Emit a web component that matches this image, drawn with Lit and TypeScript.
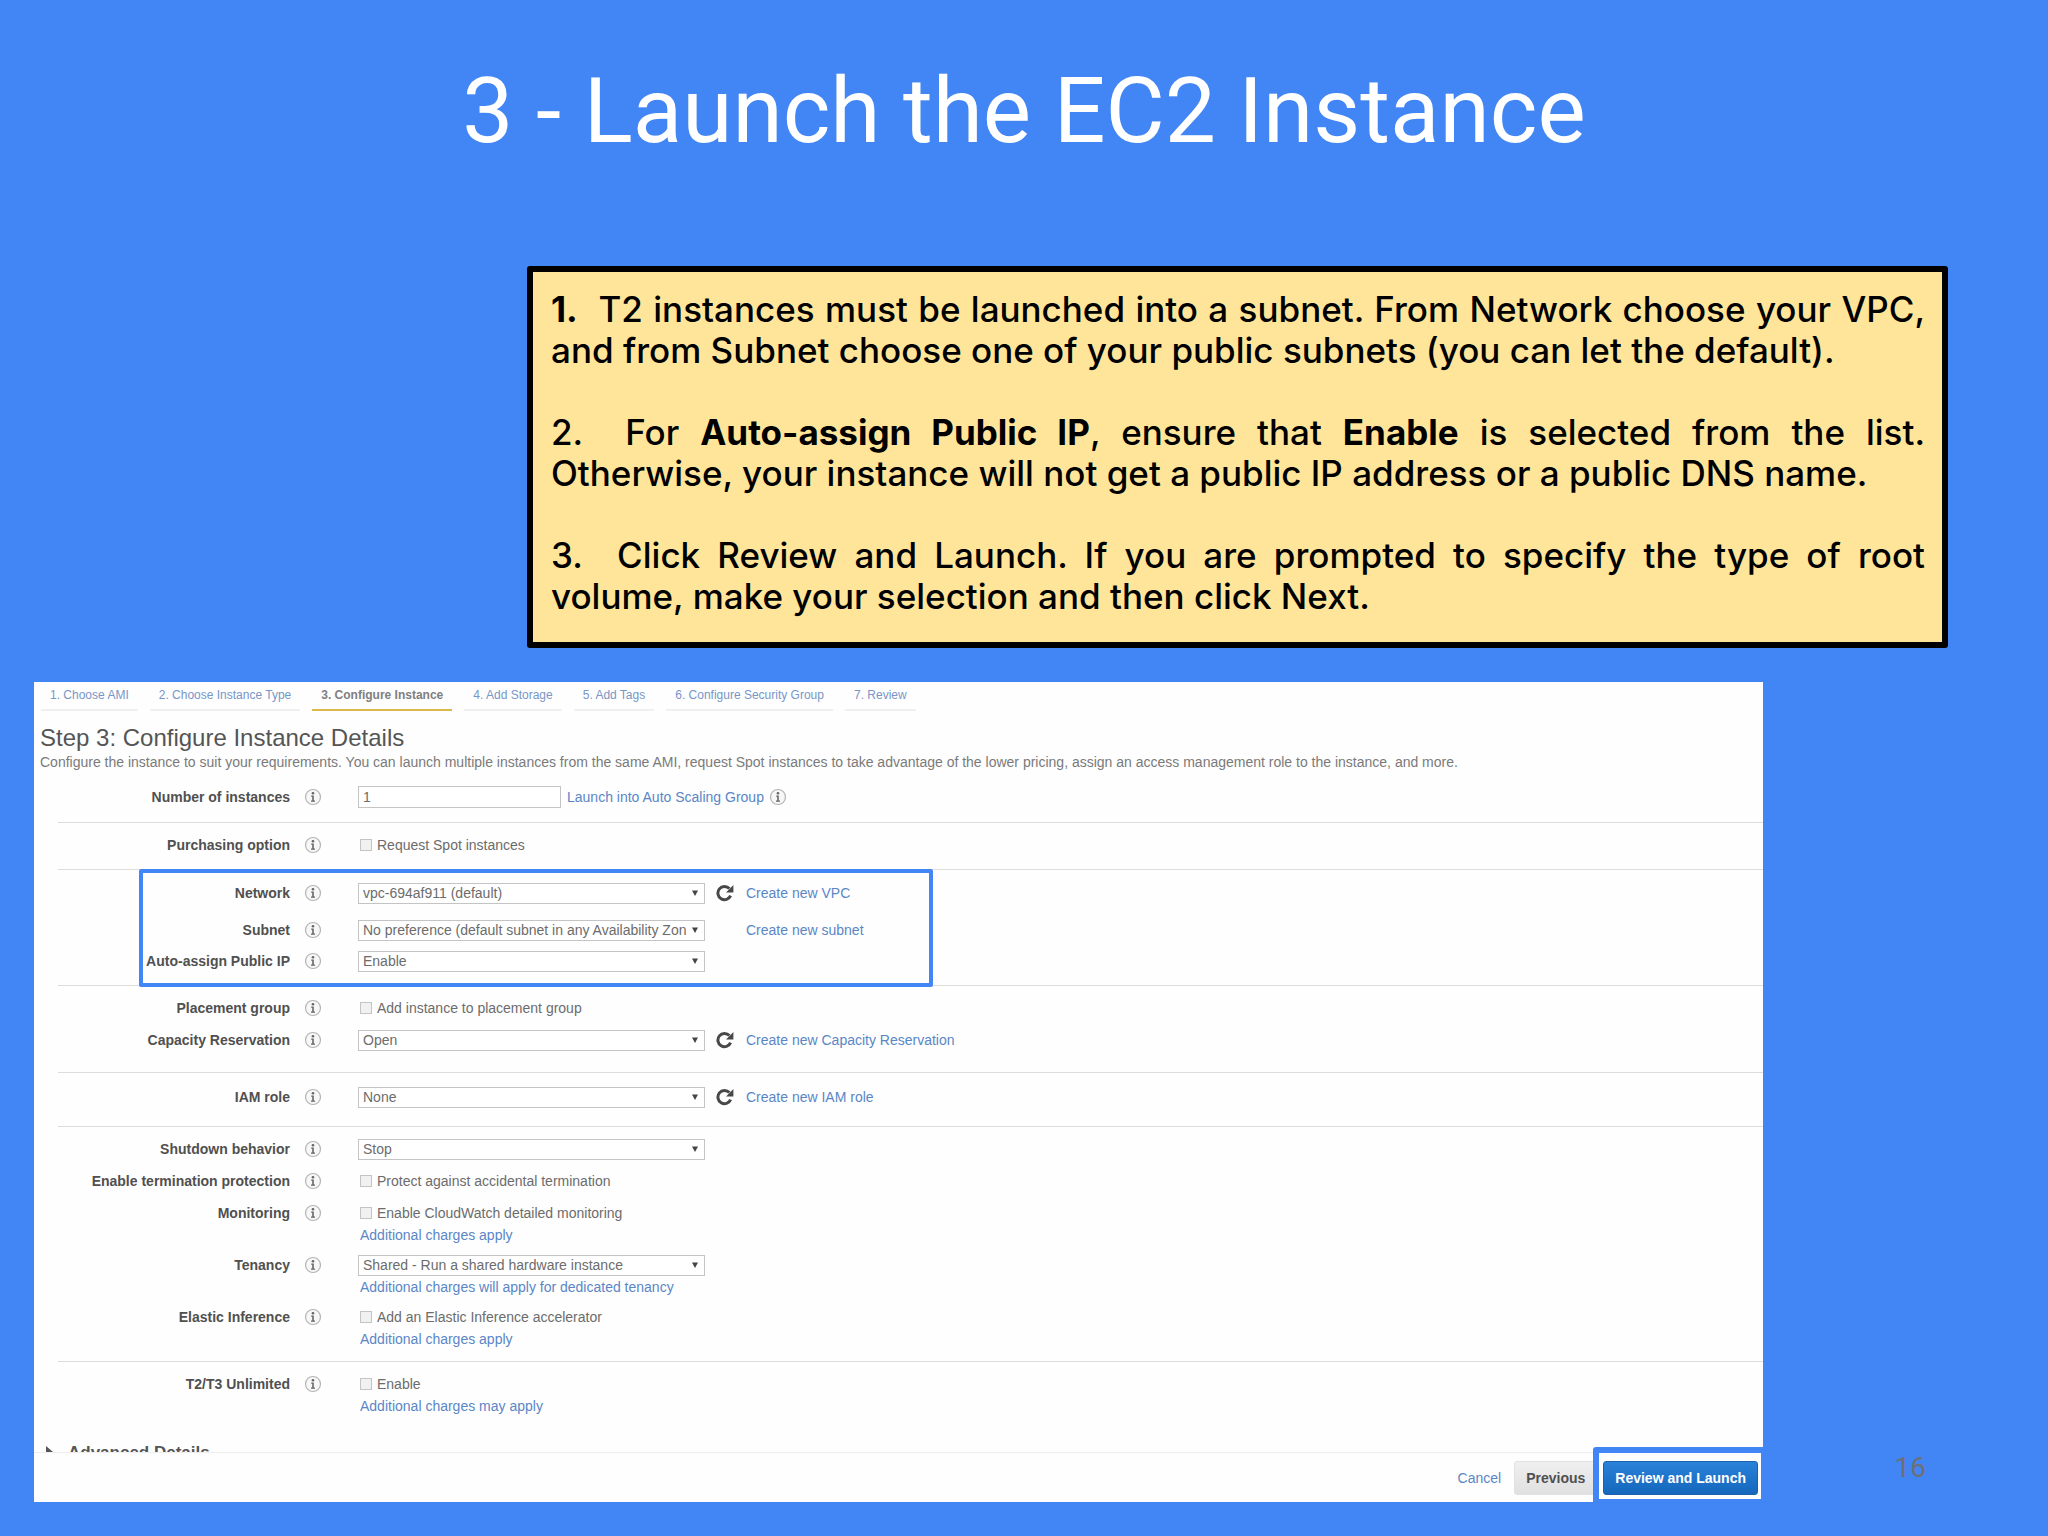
import { LitElement, html, css, svg, nothing, TemplateResult } from "lit";
import { customElement, property } from "lit/decorators.js";

type Control =
  | { kind: "number"; value: string; link: string }
  | { kind: "select"; value: string; link?: string; refresh?: boolean }
  | { kind: "check"; text: string };

interface Field {
  id: string;
  label: string;
  control: Control;
  note?: string;
  roomy?: boolean;
}

interface Group {
  name: string;
  fields: Field[];
  marked?: boolean;
}

const TABS = [
  "1. Choose AMI",
  "2. Choose Instance Type",
  "3. Configure Instance",
  "4. Add Storage",
  "5. Add Tags",
  "6. Configure Security Group",
  "7. Review",
];

const GROUPS: Group[] = [
  {
    name: "count",
    fields: [
      { id: "count", label: "Number of instances", control: { kind: "number", value: "1", link: "Launch into Auto Scaling Group" } },
    ],
  },
  {
    name: "purchase",
    fields: [{ id: "spot", label: "Purchasing option", control: { kind: "check", text: "Request Spot instances" } }],
  },
  {
    name: "network",
    marked: true,
    fields: [
      { id: "vpc", label: "Network", roomy: true, control: { kind: "select", value: "vpc-694af911 (default)", refresh: true, link: "Create new VPC" } },
      { id: "subnet", label: "Subnet", control: { kind: "select", value: "No preference (default subnet in any Availability Zone)", link: "Create new subnet" } },
      { id: "public-ip", label: "Auto-assign Public IP", control: { kind: "select", value: "Enable" } },
    ],
  },
  {
    name: "placement",
    fields: [
      { id: "placement", label: "Placement group", control: { kind: "check", text: "Add instance to placement group" } },
      { id: "capacity", label: "Capacity Reservation", control: { kind: "select", value: "Open", refresh: true, link: "Create new Capacity Reservation" } },
    ],
  },
  {
    name: "iam",
    fields: [{ id: "iam", label: "IAM role", control: { kind: "select", value: "None", refresh: true, link: "Create new IAM role" } }],
  },
  {
    name: "behavior",
    fields: [
      { id: "shutdown", label: "Shutdown behavior", control: { kind: "select", value: "Stop" } },
      { id: "protect", label: "Enable termination protection", control: { kind: "check", text: "Protect against accidental termination" } },
      { id: "monitoring", label: "Monitoring", control: { kind: "check", text: "Enable CloudWatch detailed monitoring" }, note: "Additional charges apply" },
      { id: "tenancy", label: "Tenancy", control: { kind: "select", value: "Shared - Run a shared hardware instance" }, note: "Additional charges will apply for dedicated tenancy" },
      { id: "elastic", label: "Elastic Inference", control: { kind: "check", text: "Add an Elastic Inference accelerator" }, note: "Additional charges apply" },
    ],
  },
  {
    name: "unlimited",
    fields: [{ id: "unlimited", label: "T2/T3 Unlimited", control: { kind: "check", text: "Enable" }, note: "Additional charges may apply" }],
  },
];

const infoIcon = html`<svg class="info" viewBox="0 0 18 18" aria-hidden="true">
  ${svg`<circle cx="9" cy="9" r="7.5" fill="#f7f7f7" stroke="#b4b4b4" stroke-width="1.2"/>
  <circle cx="9" cy="5.2" r="1.3" fill="#666"/>
  <path d="M7.2 7.6h2.6v5h1.2v1.2H7v-1.2h1.2V8.8h-1z" fill="#666"/>`}
</svg>`;

const refreshIcon = html`<svg class="refresh" viewBox="0 0 18 18" aria-hidden="true">
  ${svg`<path d="M14.6 11.6A6.6 6.6 0 1 1 13.4 4.6" fill="none" stroke="#484848" stroke-width="3"/>
  <path d="M17.4 1v7.4H10z" fill="#484848"/>`}
</svg>`;

const arrowIcon = html`<svg class="arrow" viewBox="0 0 6 6" aria-hidden="true">${svg`<path d="M0 0.5h6L3 6z" fill="#444"/>`}</svg>`;

@customElement("instance-form")
export class InstanceForm extends LitElement {
  @property({ attribute: false }) groups: Group[] = [];

  static styles = css`
    :host {
      display: block;
      padding-left: 24px;
      font-size: 14px;
      color: #6c6c6c;
    }
    .group {
      position: relative;
      display: flex;
      flex-direction: column;
      gap: 8px;
      padding: 12px 0;
      border-bottom: 1px solid #ddd;
    }
    .purchase { padding: 10px 0 12px; }
    .network { padding: 11px 0 12px; gap: 7px; }
    .placement { padding: 10px 0 20px; }
    .iam { padding-bottom: 17px; }
    .behavior { padding-top: 10px; }
    .unlimited { padding: 10px 0 0; border-bottom: 0; }
    .count .row { min-height: 26px; }
    .row {
      display: grid;
      grid-template-columns: 232px 68px 1fr;
      grid-auto-rows: minmax(20px, auto);
      min-height: 24px;
      align-items: center;
    }
    .roomy { margin-bottom: 6px; }
    .name {
      text-align: right;
      font-weight: bold;
      color: #505050;
      white-space: nowrap;
    }
    .tip {
      padding: 0 0 0 14px;
      margin: 0;
      border: 0;
      background: none;
      display: flex;
    }
    .info { width: 18px; height: 18px; display: block; }
    .control { display: flex; align-items: center; min-height: 24px; }
    .text {
      box-sizing: border-box;
      width: 203px;
      height: 22px;
      margin: 0 6px 0 0;
      padding: 0 4px;
      border: 1px solid #c4c4c4;
      font: inherit;
      color: inherit;
      background: #fff;
    }
    .pick { display: grid; width: 347px; align-items: center; }
    .select {
      grid-area: 1 / 1;
      appearance: none;
      box-sizing: border-box;
      width: 100%;
      height: 21px;
      margin: 0;
      padding: 0 18px 0 4px;
      border: 1px solid #c4c4c4;
      border-radius: 0;
      font: inherit;
      color: inherit;
      background: #fff;
    }
    .arrow {
      grid-area: 1 / 1;
      justify-self: end;
      width: 6px;
      height: 6px;
      margin-right: 7px;
      pointer-events: none;
    }
    .reload {
      display: flex;
      padding: 0;
      border: 0;
      background: none;
      margin-left: 11px;
    }
    .blank { width: 18px; margin-left: 11px; }
    .refresh { width: 18px; height: 18px; display: block; }
    .side { margin-left: 12px; }
    .link { color: #5a86c6; text-decoration: none; }
    .count .tip { padding-left: 5px; }
    .count .name + .tip { padding-left: 14px; }
    .check { display: flex; align-items: center; gap: 5px; padding-left: 2px; }
    .box {
      appearance: none;
      width: 12px;
      height: 12px;
      margin: 0;
      border: 1px solid #c4c4c4;
      background: #f1f1f1;
    }
    .note { grid-column: 3; padding-left: 2px; line-height: 20px; }
    .mark {
      position: absolute;
      left: 81px;
      top: -1px;
      bottom: -2px;
      width: 786px;
      border: 4px solid #4285f4;
      border-radius: 2px;
      pointer-events: none;
    }
  `;

  private control(f: Field): TemplateResult {
    const c = f.control;
    if (c.kind === "number") {
      return html`<input class="text" id=${f.id} type="text" .value=${c.value} />
        <a class="link" href="#">${c.link}</a>
        <button class="tip" type="button" aria-label="About Auto Scaling">${infoIcon}</button>`;
    }
    if (c.kind === "check") {
      return html`<label class="check"><input class="box" id=${f.id} type="checkbox" />${c.text}</label>`;
    }
    return html`<div class="pick">
        <select class="select" id=${f.id}><option>${c.value}</option></select>${arrowIcon}
      </div>
      ${c.refresh
        ? html`<button class="reload" type="button" aria-label="Refresh">${refreshIcon}</button>`
        : html`<span class="blank"></span>`}
      ${c.link ? html`<a class="link side" href="#">${c.link}</a>` : nothing}`;
  }

  render() {
    return this.groups.map(
      (g) => html`<section class="group ${g.name}">
        ${g.fields.map(
          (f) => html`<div class="row ${f.roomy ? "roomy" : ""}">
            <label class="name" for=${f.id}>${f.label}</label>
            <button class="tip" type="button" aria-label="About ${f.label}">${infoIcon}</button>
            <div class="control">${this.control(f)}</div>
            ${f.note ? html`<a class="link note" href="#">${f.note}</a>` : nothing}
          </div>`
        )}
        ${g.marked ? html`<div class="mark"></div>` : nothing}
      </section>`
    );
  }
}

@customElement("app-root")
export class AppRoot extends LitElement {
  static styles = css`
    :host {
      display: block;
      box-sizing: border-box;
      min-height: 100vh;
      padding: 56px 0 34px;
      background: #4285f4;
      font-family: "Liberation Sans", Arial, sans-serif;
    }
    .title {
      margin: 0 0 100px;
      text-align: center;
      font: 400 91px/110px Roboto, sans-serif;
      color: #fff;
    }
    .callout {
      margin: 0 100px 34px 527px;
      padding: 17px 17px 25px 18px;
      border: 6px solid #000;
      border-radius: 3px;
      background: #ffe599;
      color: #000;
      font: 500 35px/41px Inter, "Open Sans", sans-serif;
      text-align: justify;
    }
    .step { margin: 0 0 41px; }
    .step:last-child { margin-bottom: 0; }
    .stage { display: flex; padding-left: 34px; }
    .panel { flex: 1; min-width: 0; background: #fefefe; }
    .page {
      width: 285px;
      box-sizing: border-box;
      padding: 0 122px 18px 0;
      align-self: flex-end;
      text-align: right;
      font: 28px/32px Roboto, sans-serif;
      color: #6e7077;
    }
    .tabs {
      display: flex;
      gap: 12px;
      padding-left: 7px;
      font-size: 12px;
    }
    .tab {
      padding: 0 9px;
      line-height: 27px;
      border-bottom: 2px solid #f0f0f0;
      color: #7896c6;
      text-decoration: none;
      white-space: nowrap;
    }
    .current { color: #808080; border-color: #dcb94a; font-weight: bold; }
    .heading {
      margin: 0;
      padding: 13px 6px 0;
      font-size: 24px;
      font-weight: 400;
      line-height: 28px;
      color: #555;
    }
    .lead {
      margin: 0;
      padding-left: 6px;
      font-size: 14px;
      line-height: 20px;
      color: #7a7a7a;
    }
    .advanced {
      display: flex;
      align-items: flex-start;
      gap: 14px;
      box-sizing: border-box;
      height: 37px;
      padding: 27px 0 0 11px;
      overflow: hidden;
      border-bottom: 1px solid #eee;
      font-size: 17px;
      font-weight: bold;
      line-height: 20px;
      color: #555;
    }
    .caret { width: 9px; height: 12px; margin-top: 3px; }
    .actions {
      display: flex;
      justify-content: flex-end;
      align-items: center;
      height: 49px;
      padding-right: 5px;
      font-size: 14px;
    }
    .cancel { margin-right: 13px; color: #5a86c6; text-decoration: none; }
    .button {
      height: 34px;
      padding: 0 11px;
      border: 1px solid #e2e2e2;
      border-radius: 3px;
      font: bold 14px "Liberation Sans", Arial, sans-serif;
      background: linear-gradient(#f0f0f0, #e0e0e0);
      color: #505050;
    }
    .focus { position: relative; margin-left: 6px; }
    .primary {
      border-color: #1b62ae;
      background: linear-gradient(#2a82d8, #1467bd);
      color: #fff;
      display: block;
    }
    .mark {
      position: absolute;
      inset: -14px -9px -10px -10px;
      border: 6px solid #4285f4;
      border-radius: 3px;
      pointer-events: none;
    }
  `;

  render() {
    return html`
      <h1 class="title">3 - Launch the EC2 Instance</h1>
      <div class="callout">
        <p class="step"><b>1.</b>&nbsp; T2 instances must be launched into a subnet. From Network choose your VPC, and from Subnet choose one of your public subnets (you can let the default).</p>
        <p class="step">2.&nbsp; For <b>Auto-assign Public IP</b>, ensure that <b>Enable</b> is selected from the list. Otherwise, your instance will not get a public IP address or a public DNS name.</p>
        <p class="step">3.&nbsp; Click Review and Launch. If you are prompted to specify the type of root volume, make your selection and then click Next.</p>
      </div>
      <div class="stage">
        <main class="panel">
          <nav class="tabs">
            ${TABS.map((t, i) => html`<a class="tab ${i === 2 ? "current" : ""}" href="#">${t}</a>`)}
          </nav>
          <h2 class="heading">Step 3: Configure Instance Details</h2>
          <p class="lead">Configure the instance to suit your requirements. You can launch multiple instances from the same AMI, request Spot instances to take advantage of the lower pricing, assign an access management role to the instance, and more.</p>
          <instance-form .groups=${GROUPS}></instance-form>
          <div class="advanced">
            <svg class="caret" viewBox="0 0 9 12" aria-hidden="true"><path d="M1 0l7 6-7 6z" fill="#555" /></svg>
            <span>Advanced Details</span>
          </div>
          <div class="actions">
            <a class="cancel" href="#">Cancel</a>
            <button class="button" type="button">Previous</button>
            <div class="focus">
              <button class="button primary" type="button">Review and Launch</button>
              <div class="mark"></div>
            </div>
          </div>
        </main>
        <div class="page">16</div>
      </div>
    `;
  }
}
